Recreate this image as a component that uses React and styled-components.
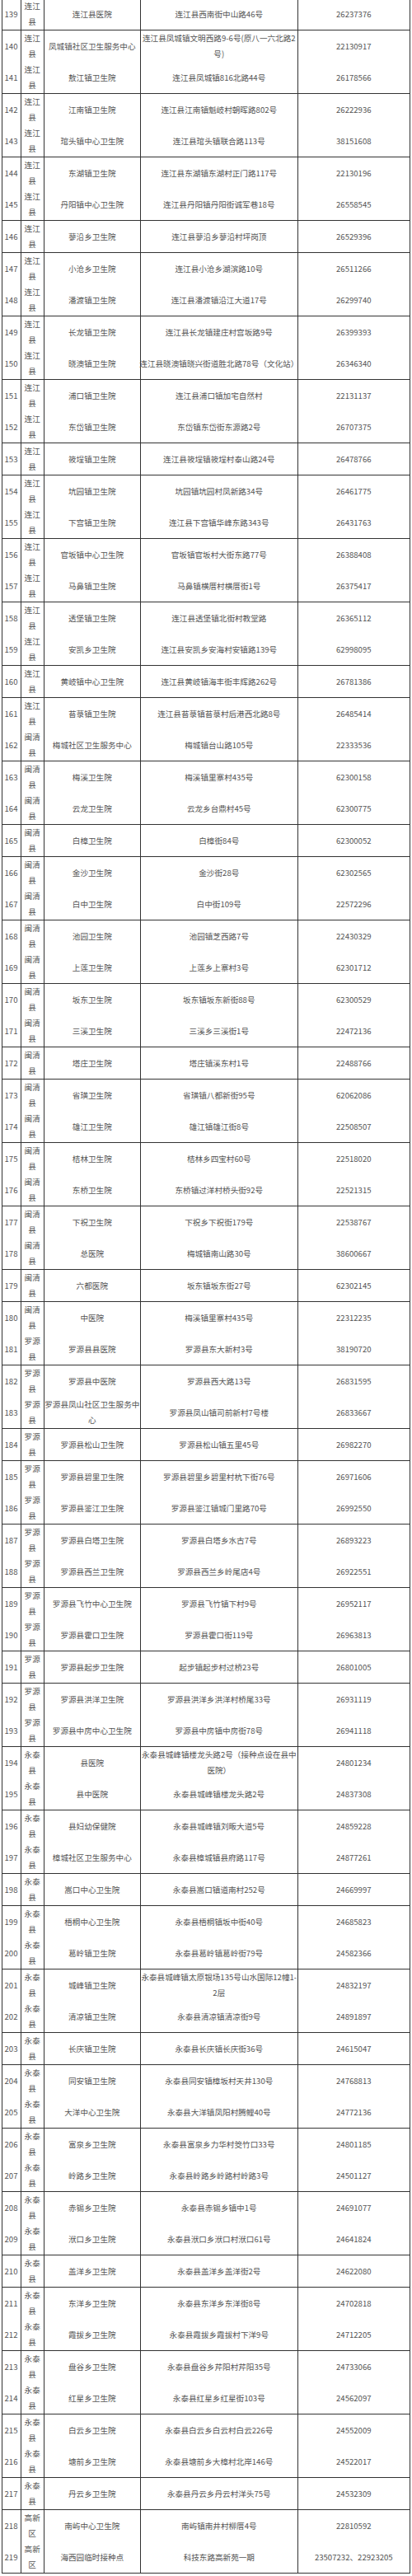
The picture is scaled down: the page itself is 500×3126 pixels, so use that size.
import React from 'react';
import styled, { createGlobalStyle } from 'styled-components';

const GlobalStyle = createGlobalStyle`
  html, body {
    margin: 0;
    padding: 0;
    background: #fff;
  }
  body {
    font-family: "Noto Sans CJK SC", "Microsoft YaHei", sans-serif;
  }
`;

// one line per clinic: no | district | name | address | phone ("\n" = forced line break)
const raw = `139|连江县|连江县医院|连江县西南街中山路46号|26237376
140|连江县|凤城镇社区卫生服务中心|连江县凤城镇文明西路9-6号(原八一六北路2\\n号)|22130917
141|连江县|敖江镇卫生院|连江县凤城镇816北路44号|26178566
142|连江县|江南镇卫生院|连江县江南镇魁岐村朝晖路802号|26222936
143|连江县|琯头镇中心卫生院|连江县琯头镇联合路113号|38151608
144|连江县|东湖镇卫生院|连江县东湖镇东湖村正门路117号|22130196
145|连江县|丹阳镇中心卫生院|连江县丹阳镇丹阳街诚军巷18号|26558545
146|连江县|蓼沿乡卫生院|连江县蓼沿乡蓼沿村坪岗顶|26529396
147|连江县|小沧乡卫生院|连江县小沧乡湖滨路10号|26511266
148|连江县|潘渡镇卫生院|连江县潘渡镇沿江大道17号|26299740
149|连江县|长龙镇卫生院|连江县长龙镇建庄村宫坂路9号|26399393
150|连江县|晓澳镇卫生院|连江县晓澳镇晓兴街道胜北路78号（文化站）|26346340
151|连江县|浦口镇卫生院|连江县浦口镇加宅自然村|22131137
152|连江县|东岱镇卫生院|东岱镇东岱街东源路2号|26707375
153|连江县|筱埕镇卫生院|连江县筱埕镇筱埕村泰山路24号|26478766
154|连江县|坑园镇卫生院|坑园镇坑园村凤新路34号|26461775
155|连江县|下宫镇卫生院|连江县下宫镇华峰东路343号|26431763
156|连江县|官坂镇中心卫生院|官坂镇官坂村大街东路77号|26388408
157|连江县|马鼻镇卫生院|马鼻镇横厝村横厝街1号|26375417
158|连江县|透堡镇卫生院|连江县透堡镇北街村教堂路|26365112
159|连江县|安凯乡卫生院|连江县安凯乡安海村安镇路139号|62998095
160|连江县|黄岐镇中心卫生院|连江县黄岐镇海丰街丰辉路262号|26781386
161|连江县|苔菉镇卫生院|连江县苔菉镇苔菉村后港西北路8号|26485414
162|闽清县|梅城社区卫生服务中心|梅城镇台山路105号|22333536
163|闽清县|梅溪卫生院|梅溪镇里寨村435号|62300158
164|闽清县|云龙卫生院|云龙乡台鼎村45号|62300775
165|闽清县|白樟卫生院|白樟街84号|62300052
166|闽清县|金沙卫生院|金沙街28号|62302565
167|闽清县|白中卫生院|白中街109号|22572296
168|闽清县|池园卫生院|池园镇芝西路7号|22430329
169|闽清县|上莲卫生院|上莲乡上寨村3号|62301712
170|闽清县|坂东卫生院|坂东镇坂东新街88号|62300529
171|闽清县|三溪卫生院|三溪乡三溪街1号|22472136
172|闽清县|塔庄卫生院|塔庄镇溪东村1号|22488766
173|闽清县|省璜卫生院|省璜镇八都新街95号|62062086
174|闽清县|雄江卫生院|雄江镇雄江街8号|22508507
175|闽清县|桔林卫生院|桔林乡四宝村60号|22518020
176|闽清县|东桥卫生院|东桥镇过洋村桥头街92号|22521315
177|闽清县|下祝卫生院|下祝乡下祝街179号|22538767
178|闽清县|总医院|梅城镇南山路30号|38600667
179|闽清县|六都医院|坂东镇坂东街27号|62302145
180|闽清县|中医院|梅溪镇里寨村435号|22312235
181|罗源县|罗源县县医院|罗源县东大新村3号|38190720
182|罗源县|罗源县中医院|罗源县西大路13号|26831595
183|罗源县|罗源县凤山社区卫生服务中\\n心|罗源县凤山镇司前新村7号楼|26833667
184|罗源县|罗源县松山卫生院|罗源县松山镇五里45号|26982270
185|罗源县|罗源县碧里卫生院|罗源县碧里乡碧里村杭下街76号|26971606
186|罗源县|罗源县鉴江卫生院|罗源县鉴江镇城门里路70号|26992550
187|罗源县|罗源县白塔卫生院|罗源县白塔乡水古7号|26893223
188|罗源县|罗源县西兰卫生院|罗源县西兰乡岭尾店4号|26922551
189|罗源县|罗源县飞竹中心卫生院|罗源县飞竹镇下村9号|26952117
190|罗源县|罗源县霍口卫生院|罗源县霍口街119号|26963813
191|罗源县|罗源县起步卫生院|起步镇起步村过桥23号|26801005
192|罗源县|罗源县洪洋卫生院|罗源县洪洋乡洪洋村桥尾33号|26931119
193|罗源县|罗源县中房中心卫生院|罗源县中房镇中房街78号|26941118
194|永泰县|县医院|永泰县城峰镇楼龙头路2号（接种点设在县中\\n医院）|24801234
195|永泰县|县中医院|永泰县城峰镇楼龙头路2号|24837308
196|永泰县|县妇幼保健院|永泰县城峰镇刘畈大道5号|24859228
197|永泰县|樟城社区卫生服务中心|永泰县樟城镇县府路117号|24877261
198|永泰县|嵩口中心卫生院|永泰县嵩口镇道南村252号|24669997
199|永泰县|梧桐中心卫生院|永泰县梧桐镇坂中街40号|24685823
200|永泰县|葛岭镇卫生院|永泰县葛岭镇葛岭街79号|24582366
201|永泰县|城峰镇卫生院|永泰县城峰镇太原银场135号山水国际12幢1-\\n2层|24832197
202|永泰县|清凉镇卫生院|永泰县清凉镇清凉街9号|24891897
203|永泰县|长庆镇卫生院|永泰县长庆镇长庆街36号|24615047
204|永泰县|同安镇卫生院|永泰县同安镇樟坂村天井130号|24768813
205|永泰县|大洋中心卫生院|永泰县大洋镇凤阳村腾鲤40号|24772136
206|永泰县|富泉乡卫生院|永泰县富泉乡力华村筊竹口33号|24801185
207|永泰县|岭路乡卫生院|永泰县岭路乡岭路村岭路3号|24501127
208|永泰县|赤锡乡卫生院|永泰县赤锡乡镇中1号|24691077
209|永泰县|洑口乡卫生院|永泰县洑口乡洑口村洑口61号|24641824
210|永泰县|盖洋乡卫生院|永泰县盖洋乡盖洋街2号|24622080
211|永泰县|东洋乡卫生院|永泰县东洋乡东洋街8号|24702818
212|永泰县|霞拔乡卫生院|永泰县霞拔乡霞拔村下洋9号|24712205
213|永泰县|盘谷乡卫生院|永泰县盘谷乡芹阳村芹阳35号|24733066
214|永泰县|红星乡卫生院|永泰县红星乡红星街103号|24562097
215|永泰县|白云乡卫生院|永泰县白云乡白云村白云226号|24552009
216|永泰县|塘前乡卫生院|永泰县塘前乡大樟村北岸146号|24522017
217|永泰县|丹云乡卫生院|永泰县丹云乡丹云村洋头75号|24532309
218|高新区|南屿中心卫生院|南屿镇南井村柳厝4号|22810592
219|高新区|海西园临时接种点|科技东路高新苑一期|23507232、22923205`;

const rows = raw.split('\n').map((line) => {
  const [no, district, name, address, phone] = line.split('|').map((s) => s.replace(/\\n/g, '\n'));
  return { no, district, name, address, phone };
});

const Table = styled.div`
  display: flex;
  flex-direction: column;
  gap: 1px;
  box-sizing: border-box;
  width: 496.3px;
  margin: -3.08px 0 0 1.5px;
  padding: 1px;
  background: #333;
`;

const Row = styled.div`
  display: grid;
  grid-template-columns: 22px 27.3px 116px 190px 135px;
  column-gap: 1px;
  height: 37.58px;
`;

const Cell = styled.div`
  display: flex;
  align-items: center;
  justify-content: center;
  background: #fff;
  color: #555;
  font-size: 9.6px;
  line-height: 19px;
  text-align: center;
  white-space: pre;
  padding-top: ${(p) => (p.$stack ? '0' : '1px')};
  overflow: visible;
`;

export default function App() {
  return (
    <>
      <GlobalStyle />
      <Table>
        {rows.map((r) => (
          <Row key={r.no}>
            <Cell>{r.no}</Cell>
            <Cell $stack>{`${r.district.slice(0, 2)}\n${r.district.slice(2)}`}</Cell>
            <Cell $stack={r.name.includes('\n')}>{r.name}</Cell>
            <Cell $stack={r.address.includes('\n')}>{r.address}</Cell>
            <Cell>{r.phone}</Cell>
          </Row>
        ))}
      </Table>
    </>
  );
}
